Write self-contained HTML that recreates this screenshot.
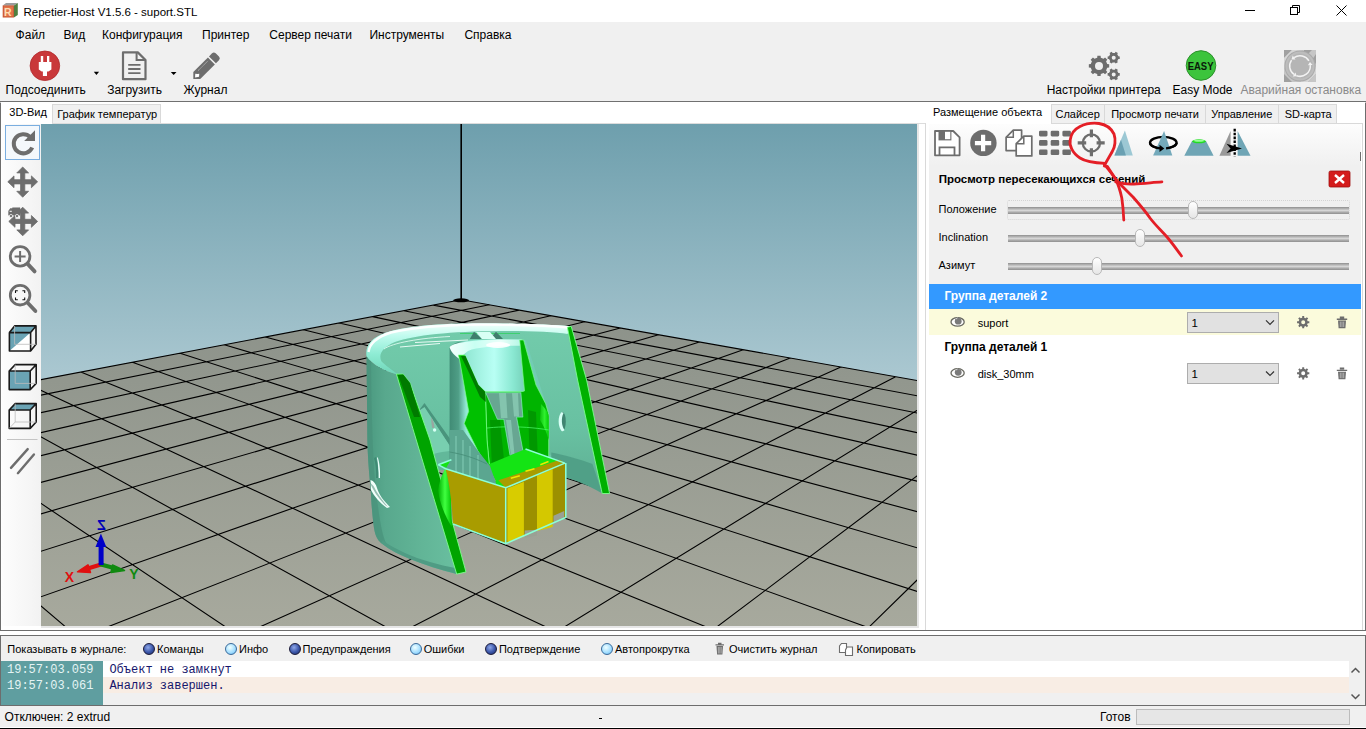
<!DOCTYPE html><html><head><meta charset="utf-8"><style>
*{margin:0;padding:0;box-sizing:border-box}
html,body{width:1366px;height:729px;overflow:hidden;background:#f0f0f0;font-family:"Liberation Sans",sans-serif;position:relative}
.t{position:absolute;white-space:nowrap}
.a{position:absolute}
svg{position:absolute;overflow:visible}
</style></head><body>
<div class="a" style="left:0px;top:0px;width:1366px;height:22px;background:#fff;"></div>
<div class="t" style="left:23.5px;top:6.6px;font-size:11.5px;line-height:11.5px;color:#000;font-weight:normal;font-family:'Liberation Sans', sans-serif;">Repetier-Host V1.5.6 - suport.STL</div>
<svg style="left:0;top:0" width="20" height="20" viewBox="0 0 20 20">
<path d="M2.7 5.4 L6 3 H17.8 L13.9 5.4Z" fill="#9c9c9c"/>
<path d="M13.9 5.4 L17.8 3 V15 L13.9 17.5Z" fill="#4f8040"/>
<rect x="2.7" y="5.4" width="11.2" height="12.1" fill="#c5502c"/>
<rect x="3.6" y="6.3" width="9.4" height="10.3" fill="#e2744a"/>
<text x="4" y="15.8" font-family="Liberation Sans" font-weight="bold" font-size="10.5" fill="#ffdcb0">R</text></svg><div class="a" style="left:1245px;top:10px;width:10px;height:1px;background:#000;"></div>
<svg style="left:1289px;top:4px" width="12" height="12" viewBox="0 0 12 12"><rect x="1.5" y="3.5" width="7" height="7" fill="none" stroke="#000"/><path d="M3.5 3.5V1.5H10.5V8.5H8.5" fill="none" stroke="#000"/></svg><svg style="left:1336px;top:5px" width="11" height="11" viewBox="0 0 11 11"><path d="M0.5 0.5L10.5 10.5M10.5 0.5L0.5 10.5" stroke="#000" stroke-width="1"/></svg><div class="t" style="left:15.6px;top:29.4px;font-size:12px;line-height:12px;color:#000;font-weight:normal;font-family:'Liberation Sans', sans-serif;">Файл</div>
<div class="t" style="left:63.5px;top:29.4px;font-size:12px;line-height:12px;color:#000;font-weight:normal;font-family:'Liberation Sans', sans-serif;">Вид</div>
<div class="t" style="left:102.0px;top:29.4px;font-size:12px;line-height:12px;color:#000;font-weight:normal;font-family:'Liberation Sans', sans-serif;">Конфигурация</div>
<div class="t" style="left:202.0px;top:29.4px;font-size:12px;line-height:12px;color:#000;font-weight:normal;font-family:'Liberation Sans', sans-serif;">Принтер</div>
<div class="t" style="left:269.3px;top:29.4px;font-size:12px;line-height:12px;color:#000;font-weight:normal;font-family:'Liberation Sans', sans-serif;">Сервер печати</div>
<div class="t" style="left:369.4px;top:29.4px;font-size:12px;line-height:12px;color:#000;font-weight:normal;font-family:'Liberation Sans', sans-serif;">Инструменты</div>
<div class="t" style="left:464.4px;top:29.4px;font-size:12px;line-height:12px;color:#000;font-weight:normal;font-family:'Liberation Sans', sans-serif;">Справка</div>
<div class="t" style="left:5.6px;top:83.8px;font-size:12px;line-height:12px;color:#000;font-weight:normal;font-family:'Liberation Sans', sans-serif;">Подсоединить</div>
<div class="t" style="left:107.2px;top:83.8px;font-size:12px;line-height:12px;color:#000;font-weight:normal;font-family:'Liberation Sans', sans-serif;">Загрузить</div>
<div class="t" style="left:183.6px;top:83.8px;font-size:12px;line-height:12px;color:#000;font-weight:normal;font-family:'Liberation Sans', sans-serif;">Журнал</div>
<div class="t" style="left:1046.7px;top:83.8px;font-size:12px;line-height:12px;color:#000;font-weight:normal;font-family:'Liberation Sans', sans-serif;">Настройки принтера</div>
<div class="t" style="left:1172.5px;top:83.8px;font-size:12px;line-height:12px;color:#000;font-weight:normal;font-family:'Liberation Sans', sans-serif;">Easy Mode</div>
<div class="t" style="left:1240.5px;top:83.8px;font-size:12px;line-height:12px;color:#8a8a8a;font-weight:normal;font-family:'Liberation Sans', sans-serif;">Аварийная остановка</div>
<svg style="left:0;top:0" width="1366" height="100" viewBox="0 0 1366 100">
<circle cx="44.9" cy="65.8" r="14.8" fill="#c9383a" stroke="#b02a2c" stroke-width="0.8"/>
<path d="M40.8 56h2.4v6.2h-2.4zM47 56h2.3v6.2H47z" fill="#fff"/>
<path d="M38.8 62.1h12.6v7.3l-3 2.2H47v4.3h-4.1v-4.3h-1.2l-2.9-2.2z" fill="#fff"/>
<path d="M93.8 71.8h5.3l-2.65 3.2z" fill="#000"/>
<path d="M170.8 71.9h5.7l-2.85 3.1z" fill="#000"/>
<path d="M123 52.4h14.8l7.7 7.6v19.2H123z" fill="none" stroke="#6d6d6d" stroke-width="2.2" stroke-linejoin="round"/>
<path d="M136.6 52.4v7.7h8.9" fill="none" stroke="#6d6d6d" stroke-width="2"/>
<path d="M128.2 64.9h12.3M128.2 69h12.3M128.2 73.2h12.3" stroke="#6d6d6d" stroke-width="1.8"/>
<g transform="translate(196.75 75.55) rotate(-45)">
<path d="M-4.9 0 L0 -4.9 H20.7 V4.9 H0 Z" fill="#6d6d6d"/>
<path d="M22.2 -4.9 H26.5 A2.6 2.6 0 0 1 29.1 -2.3 V2.3 A2.6 2.6 0 0 1 26.5 4.9 H22.2Z" fill="#6d6d6d"/>
<path d="M4.4 -2.5 H18.4" stroke="#d8d8d8" stroke-width="0.7" stroke-dasharray="1 0.6"/>
<path d="M-2.6 0.2 L0.2 -2.3 L1.6 -0.6 L3 0.6 L0.8 2.4Z" fill="#fff"/>
</g>
<path d="M1107.20 64.10 L1109.17 64.29 L1109.17 67.51 L1107.20 67.70 L1106.07 70.43 L1107.33 71.95 L1105.05 74.23 L1103.53 72.97 L1100.80 74.10 L1100.61 76.07 L1097.39 76.07 L1097.20 74.10 L1094.47 72.97 L1092.95 74.23 L1090.67 71.95 L1091.93 70.43 L1090.80 67.70 L1088.83 67.51 L1088.83 64.29 L1090.80 64.10 L1091.93 61.37 L1090.67 59.85 L1092.95 57.57 L1094.47 58.83 L1097.20 57.70 L1097.39 55.73 L1100.61 55.73 L1100.80 57.70 L1103.53 58.83 L1105.05 57.57 L1107.33 59.85 L1106.07 61.37Z M1103.00 65.90 A4.0 4.0 0 1 0 1095.00 65.90 A4.0 4.0 0 1 0 1103.00 65.90Z" fill="#6d6d6d" fill-rule="evenodd"/>
<path d="M1118.40 56.31 L1119.76 56.41 L1119.76 58.99 L1118.40 59.09 L1117.25 61.07 L1117.85 62.31 L1115.62 63.60 L1114.84 62.46 L1112.56 62.46 L1111.78 63.60 L1109.55 62.31 L1110.15 61.07 L1109.00 59.09 L1107.64 58.99 L1107.64 56.41 L1109.00 56.31 L1110.15 54.33 L1109.55 53.09 L1111.78 51.80 L1112.56 52.94 L1114.84 52.94 L1115.62 51.80 L1117.85 53.09 L1117.25 54.33Z M1115.70 57.70 A2.0 2.0 0 1 0 1111.70 57.70 A2.0 2.0 0 1 0 1115.70 57.70Z" fill="#6d6d6d" fill-rule="evenodd"/>
<path d="M1118.40 73.01 L1119.76 73.11 L1119.76 75.69 L1118.40 75.79 L1117.25 77.77 L1117.85 79.01 L1115.62 80.30 L1114.84 79.16 L1112.56 79.16 L1111.78 80.30 L1109.55 79.01 L1110.15 77.77 L1109.00 75.79 L1107.64 75.69 L1107.64 73.11 L1109.00 73.01 L1110.15 71.03 L1109.55 69.79 L1111.78 68.50 L1112.56 69.64 L1114.84 69.64 L1115.62 68.50 L1117.85 69.79 L1117.25 71.03Z M1115.70 74.40 A2.0 2.0 0 1 0 1111.70 74.40 A2.0 2.0 0 1 0 1115.70 74.40Z" fill="#6d6d6d" fill-rule="evenodd"/>
<circle cx="1201" cy="65.5" r="14.8" fill="#3cc43c" stroke="#2b8f2b" stroke-width="1"/>
<text x="1187.7" y="70" font-family="Liberation Sans" font-weight="bold" font-size="10" fill="#0a1a0a" textLength="25.8" lengthAdjust="spacingAndGlyphs">EASY</text>
<rect x="1284" y="50" width="32" height="32" fill="#c6c6c6"/>
<path d="M1284 50h8l-8 8zM1304 50h8l-8 8h0zM1316 54v10l-4-4zM1284 74v8h8zM1300 82h8l8-8v-6z" fill="#a0a0a0"/>
<path d="M1292 50h10l-18 18v-10zM1316 66v8l-8 8h-8z" fill="#d6d6d6"/>
<circle cx="1300" cy="66" r="15.6" fill="#a9a9a9"/>
<circle cx="1300" cy="66" r="14.6" fill="#bdbdbd"/>
<circle cx="1300" cy="66" r="12.6" fill="#b5b5b5"/>
<path d="M1294.09 57.56 A10.3 10.3 0 0 1 1308.92 60.85" fill="none" stroke="#f2f2f2" stroke-width="1.5"/><path d="M1310.26 65.10 A10.3 10.3 0 0 1 1296.48 75.68" fill="none" stroke="#f2f2f2" stroke-width="1.5"/><path d="M1294.09 74.44 A10.3 10.3 0 0 1 1291.56 60.09" fill="none" stroke="#f2f2f2" stroke-width="1.5"/><path d="M1291.47 59.40 L1292.72 55.60 L1295.47 59.53Z" fill="#f2f2f2"/><path d="M1309.98 61.91 L1312.65 64.89 L1307.87 65.31Z" fill="#f2f2f2"/><path d="M1296.71 76.27 L1292.72 76.40 L1295.47 72.47Z" fill="#f2f2f2"/>
</svg><div class="a" style="left:0px;top:101px;width:1366px;height:1px;background:#707070;"></div>
<div class="a" style="left:0px;top:102px;width:1366px;height:1px;background:#c8c8c8;"></div>
<div class="a" style="left:0px;top:103px;width:1px;height:527px;background:#6d6d6d;"></div>
<div class="a" style="left:1365px;top:103px;width:1px;height:527px;background:#6d6d6d;"></div>
<div class="a" style="left:0px;top:630px;width:1366px;height:1px;background:#6d6d6d;"></div>
<div class="a" style="left:0px;top:631px;width:1366px;height:4px;background:#fff;"></div>
<div class="a" style="left:1px;top:102px;width:924px;height:528px;background:#fff;"></div>
<div class="a" style="left:52px;top:123px;width:873px;height:1px;background:#dcdcdc;"></div>
<div class="a" style="left:1px;top:102px;width:51px;height:22px;background:#fff;"></div>
<div class="a" style="left:52px;top:104px;width:109px;height:19px;background:#f0f0f0;border:1px solid #d9d9d9;border-bottom:none"></div>
<div class="t" style="left:9.3px;top:106.7px;font-size:11px;line-height:11px;color:#000;font-weight:normal;font-family:'Liberation Sans', sans-serif;">3D-Вид</div>
<div class="t" style="left:57.2px;top:108.6px;font-size:11px;line-height:11px;color:#000;font-weight:normal;font-family:'Liberation Sans', sans-serif;">График температур</div>
<div class="a" style="left:2px;top:124px;width:39px;height:502px;background:linear-gradient(to right,#fdfdfd,#f2f2f2);"></div>
<div class="a" style="left:5px;top:125px;width:35px;height:35px;background:#f4f8fc;border:1px solid #7aaee0"></div>
<svg style="left:0;top:0" width="45" height="480" viewBox="0 0 45 480">
<path d="M30.2 137 A9.6 9.6 0 1 0 32.2 147.5" fill="none" stroke="#6d6d6d" stroke-width="4"/>
<path d="M35 130.2 V141 H24.2 Z" fill="#6d6d6d"/>
<g fill="#6d6d6d" stroke="#6d6d6d" stroke-width="0.8" stroke-linejoin="round">
<path d="M20.6 172 h4.2 v19.6 h-4.2z M13.5 179.7 h18.4 v4.2 h-18.4z"/>
<path d="M22.7 167 l-5.9 5.9 h11.8z M22.7 197.2 l-5.9 -5.9 h11.8z M7.8 181.8 l6.2 -5.9 v11.8z M37.6 181.8 l-6.2 -5.9 v11.8z"/>
<path d="M20.6 212 h4.2 v19 h-4.2z M13.5 219.3 h18.4 v4.2 h-18.4z"/>
<path d="M22.7 207.2 l-5.9 5.9 h11.8z M22.7 235.8 l-5.9 -5.9 h11.8z M8.8 221.4 l6.2 -5.9 v11.8z M37.6 221.4 l-6.2 -5.9 v11.8z"/>
<path d="M12.5 207.8 h7.5 v7.4 h-7.5z M8.6 211 l1.6 -2.4 h2.6 v6.6 h-4.2z" stroke-width="0.5"/>
</g>
<circle cx="11" cy="216" r="1.6" fill="#6d6d6d" stroke="#fff" stroke-width="0.7"/><circle cx="17" cy="216" r="1.6" fill="#6d6d6d" stroke="#fff" stroke-width="0.7"/><path d="M9.6 211.3h2.2" stroke="#fff" stroke-width="1"/>
<circle cx="20.1" cy="256.4" r="9.8" fill="none" stroke="#6d6d6d" stroke-width="2.8"/>
<path d="M27.6 263.9 L34.6 271.4" stroke="#6d6d6d" stroke-width="3.8" stroke-linecap="round"/>
<path d="M14.6 256.4h11M20.1 250.9v11" stroke="#6d6d6d" stroke-width="2"/>
<circle cx="20.1" cy="295.2" r="9.8" fill="none" stroke="#6d6d6d" stroke-width="2.8"/>
<path d="M27.6 302.7 L35.4 311" stroke="#6d6d6d" stroke-width="3.8" stroke-linecap="round"/>
<path d="M15.5 293v-2.3h2.3M24.7 293v-2.3h-2.3M15.5 297.4v2.3h2.3M24.7 297.4v2.3h-2.3" fill="none" stroke="#111" stroke-width="1.1"/>
<g stroke="#1a1a1a" stroke-width="1.6" fill="none" stroke-linejoin="round">
<path d="M9.4 332.6 L31 351" fill="none"/>
</g>
<path d="M9.4 332.6 H30.6 V351 H9.4Z" fill="#fff"/>
<path d="M9.4 332.6 L14.6 325.9 H36 L30.6 332.6Z M9.4 332.6 H30.6 L9.4 351Z" fill="#6aa3b4"/>
<g stroke="#1a1a1a" stroke-width="1.6" fill="none" stroke-linejoin="round">
<path d="M9.4 332.6 H30.6 V351 H9.4Z M9.4 332.6 L14.6 325.9 H36 V344.3 L30.6 351 M30.6 332.6 L36 325.9"/>
</g>
<path d="M14.6 326 V344.3 H36" stroke="#bbb" stroke-width="0.8" fill="none"/>
<path d="M9.2 371 H30.2 V389.6 H9.2Z" fill="#6aa3b4"/>
<g stroke="#1a1a1a" stroke-width="1.6" fill="none" stroke-linejoin="round">
<path d="M9.2 371 H30.2 V389.6 H9.2Z M9.2 371 L15.2 364.6 H36.2 V383.4 L30.2 389.6 M30.2 371 L36.2 364.6"/>
</g>
<path d="M15.2 364.6 V383.4 H36.2" stroke="#bbb" stroke-width="0.8" fill="none"/>
<path d="M9.2 410 L15.2 403.6 H36.2 L30.2 410Z" fill="#6aa3b4"/>
<g stroke="#1a1a1a" stroke-width="1.6" fill="none" stroke-linejoin="round">
<path d="M9.2 410 H30.2 V428.4 H9.2Z M9.2 410 L15.2 403.6 H36.2 V422 L30.2 428.4 M30.2 410 L36.2 403.6"/>
</g>
<path d="M15.2 403.6 V422 H36.2 M15.2 422 L9.2 428.4" stroke="#bbb" stroke-width="0.8" fill="none"/>
<path d="M7 439.5 H37.5" stroke="#c4c4c4" stroke-width="1"/>
<path d="M11 467.9 L27.7 449.1 M17.9 473.2 L33.9 454.5" stroke="#6d6d6d" stroke-width="2.4" stroke-linecap="round"/>
</svg><div class="a" style="left:925px;top:102px;width:440px;height:528px;background:#fff;"></div>
<div class="a" style="left:925px;top:123px;width:438px;height:507px;background:#fff;border:1px solid #d9d9d9;border-bottom:none"></div>
<div class="a" style="left:926px;top:102px;width:125px;height:23px;background:#fff;"></div>
<div class="a" style="left:1051px;top:104px;width:54px;height:19px;background:#f0f0f0;border:1px solid #d9d9d9;border-bottom:none"></div>
<div class="a" style="left:1104px;top:104px;width:102px;height:19px;background:#f0f0f0;border:1px solid #d9d9d9;border-bottom:none"></div>
<div class="a" style="left:1205px;top:104px;width:74px;height:19px;background:#f0f0f0;border:1px solid #d9d9d9;border-bottom:none"></div>
<div class="a" style="left:1278px;top:104px;width:59px;height:19px;background:#f0f0f0;border:1px solid #d9d9d9;border-bottom:none"></div>
<div class="t" style="left:933.0px;top:106.7px;font-size:11px;line-height:11px;color:#000;font-weight:normal;font-family:'Liberation Sans', sans-serif;">Размещение объекта</div>
<div class="t" style="left:1055.5px;top:108.5px;font-size:11px;line-height:11px;color:#000;font-weight:normal;font-family:'Liberation Sans', sans-serif;">Слайсер</div>
<div class="t" style="left:1111.2px;top:108.5px;font-size:11px;line-height:11px;color:#000;font-weight:normal;font-family:'Liberation Sans', sans-serif;">Просмотр печати</div>
<div class="t" style="left:1211.2px;top:108.5px;font-size:11px;line-height:11px;color:#000;font-weight:normal;font-family:'Liberation Sans', sans-serif;">Управление</div>
<div class="t" style="left:1284.7px;top:108.5px;font-size:11px;line-height:11px;color:#000;font-weight:normal;font-family:'Liberation Sans', sans-serif;">SD-карта</div>
<div class="a" style="left:929px;top:124px;width:432px;height:42px;background:linear-gradient(to bottom,#fdfdfd,#f0f0f0);"></div>
<div class="a" style="left:929px;top:166px;width:432px;height:118px;background:#f0f0f0;"></div>
<div class="a" style="left:1360px;top:152px;width:1px;height:9px;background:#6d6d6d;"></div>
<div class="t" style="left:938.7px;top:174.0px;font-size:11.5px;line-height:11.5px;color:#000;font-weight:bold;font-family:'Liberation Sans', sans-serif;">Просмотр пересекающихся сечений</div>
<div class="t" style="left:938.5px;top:203.7px;font-size:11px;line-height:11px;color:#000;font-weight:normal;font-family:'Liberation Sans', sans-serif;">Положение</div>
<div class="t" style="left:938.5px;top:231.9px;font-size:11px;line-height:11px;color:#000;font-weight:normal;font-family:'Liberation Sans', sans-serif;">Inclination</div>
<div class="t" style="left:938.5px;top:259.7px;font-size:11px;line-height:11px;color:#000;font-weight:normal;font-family:'Liberation Sans', sans-serif;">Азимут</div>
<div class="a" style="left:1008px;top:207px;width:341px;height:7px;background:linear-gradient(to bottom,#8e8e8e 0%,#b4b4b4 25%,#d6d6d6 50%,#a8a8a8 78%,#8f8f8f 100%);"></div>
<div class="a" style="left:1188px;top:201px;width:10px;height:18px;background:linear-gradient(to bottom,#ffffff,#e6e6e6);border:1px solid #b8b8b8;border-radius:5px"></div>
<div class="a" style="left:1008px;top:235px;width:341px;height:7px;background:linear-gradient(to bottom,#8e8e8e 0%,#b4b4b4 25%,#d6d6d6 50%,#a8a8a8 78%,#8f8f8f 100%);"></div>
<div class="a" style="left:1135px;top:229px;width:10px;height:18px;background:linear-gradient(to bottom,#ffffff,#e6e6e6);border:1px solid #b8b8b8;border-radius:5px"></div>
<div class="a" style="left:1008px;top:263px;width:341px;height:7px;background:linear-gradient(to bottom,#8e8e8e 0%,#b4b4b4 25%,#d6d6d6 50%,#a8a8a8 78%,#8f8f8f 100%);"></div>
<div class="a" style="left:1092px;top:257px;width:10px;height:18px;background:linear-gradient(to bottom,#ffffff,#e6e6e6);border:1px solid #b8b8b8;border-radius:5px"></div>
<div class="a" style="left:1007px;top:200px;width:343px;height:20px;background:transparent;border:1px dotted #d4d4d4;border-radius:2px"></div>
<div class="a" style="left:929px;top:284px;width:432px;height:25px;background:#3399ff;"></div>
<div class="t" style="left:944.4px;top:289.8px;font-size:12px;line-height:12px;color:#fff;font-weight:bold;font-family:'Liberation Sans', sans-serif;">Группа деталей 2</div>
<div class="a" style="left:929px;top:309px;width:432px;height:26px;background:#fbfbdc;"></div>
<div class="t" style="left:977.7px;top:317.7px;font-size:11px;line-height:11px;color:#000;font-weight:normal;font-family:'Liberation Sans', sans-serif;">suport</div>
<div class="t" style="left:944.4px;top:340.6px;font-size:12px;line-height:12px;color:#000;font-weight:bold;font-family:'Liberation Sans', sans-serif;">Группа деталей 1</div>
<div class="t" style="left:977.7px;top:368.7px;font-size:11px;line-height:11px;color:#000;font-weight:normal;font-family:'Liberation Sans', sans-serif;">disk_30mm</div>
<div class="a" style="left:1187px;top:312px;width:92px;height:21px;background:#e1e1e1;border:1px solid #adadad"></div>
<div class="t" style="left:1191.6px;top:317.5px;font-size:11.5px;line-height:11.5px;color:#000;font-weight:normal;font-family:'Liberation Sans', sans-serif;">1</div>
<div class="a" style="left:1187px;top:363px;width:92px;height:21px;background:#e1e1e1;border:1px solid #adadad"></div>
<div class="t" style="left:1191.6px;top:368.6px;font-size:11.5px;line-height:11.5px;color:#000;font-weight:normal;font-family:'Liberation Sans', sans-serif;">1</div>
<svg style="left:0;top:0" width="1366" height="400" viewBox="0 0 1366 400"><path d="M1266 320.4l4 4 4-4" fill="none" stroke="#333" stroke-width="1.2"/><ellipse cx="957.6" cy="321.9" rx="6.6" ry="4.3" fill="#fff" stroke="#6a6a62" stroke-width="1.3"/><circle cx="958.2" cy="321.2" r="3.4" fill="#7a7a7a"/><path d="M956 319.0 l1.6 -1.2" stroke="#ddd" stroke-width="0.9"/><path d="M1307.69 321.21 L1309.32 321.23 L1309.32 323.17 L1307.69 323.19 L1307.07 324.68 L1308.22 325.84 L1306.84 327.22 L1305.68 326.07 L1304.19 326.69 L1304.17 328.32 L1302.23 328.32 L1302.21 326.69 L1300.72 326.07 L1299.56 327.22 L1298.18 325.84 L1299.33 324.68 L1298.71 323.19 L1297.08 323.17 L1297.08 321.23 L1298.71 321.21 L1299.33 319.72 L1298.18 318.56 L1299.56 317.18 L1300.72 318.33 L1302.21 317.71 L1302.23 316.08 L1304.17 316.08 L1304.19 317.71 L1305.68 318.33 L1306.84 317.18 L1308.22 318.56 L1307.07 319.72Z M1305.20 322.20 A2.0 2.0 0 1 0 1301.20 322.20 A2.0 2.0 0 1 0 1305.20 322.20Z" fill="#6d6d6d" fill-rule="evenodd"/><path d="M1336.8 318.59999999999997h10.4v1.3h-10.4z M1339.8 316.4h4.4v2h-4.4z" fill="#6d6d6d"/><path d="M1338 320.59999999999997h8l-0.6 7.6h-6.8z" fill="#6d6d6d"/><path d="M1340.3 321.59999999999997v5.4M1342 321.59999999999997v5.4M1343.7 321.59999999999997v5.4" stroke="#ddd" stroke-width="0.6"/><path d="M1266 371.5l4 4 4-4" fill="none" stroke="#333" stroke-width="1.2"/><ellipse cx="957.6" cy="373.0" rx="6.6" ry="4.3" fill="#fff" stroke="#6a6a62" stroke-width="1.3"/><circle cx="958.2" cy="372.3" r="3.4" fill="#7a7a7a"/><path d="M956 370.1 l1.6 -1.2" stroke="#ddd" stroke-width="0.9"/><path d="M1307.69 372.31 L1309.32 372.33 L1309.32 374.27 L1307.69 374.29 L1307.07 375.78 L1308.22 376.94 L1306.84 378.32 L1305.68 377.17 L1304.19 377.79 L1304.17 379.42 L1302.23 379.42 L1302.21 377.79 L1300.72 377.17 L1299.56 378.32 L1298.18 376.94 L1299.33 375.78 L1298.71 374.29 L1297.08 374.27 L1297.08 372.33 L1298.71 372.31 L1299.33 370.82 L1298.18 369.66 L1299.56 368.28 L1300.72 369.43 L1302.21 368.81 L1302.23 367.18 L1304.17 367.18 L1304.19 368.81 L1305.68 369.43 L1306.84 368.28 L1308.22 369.66 L1307.07 370.82Z M1305.20 373.30 A2.0 2.0 0 1 0 1301.20 373.30 A2.0 2.0 0 1 0 1305.20 373.30Z" fill="#6d6d6d" fill-rule="evenodd"/><path d="M1336.8 369.7h10.4v1.3h-10.4z M1339.8 367.5h4.4v2h-4.4z" fill="#6d6d6d"/><path d="M1338 371.7h8l-0.6 7.6h-6.8z" fill="#6d6d6d"/><path d="M1340.3 372.7v5.4M1342 372.7v5.4M1343.7 372.7v5.4" stroke="#ddd" stroke-width="0.6"/><path d="M935 131h18.2l6.4 6.4V155.3H935z" fill="#fff" stroke="#6d6d6d" stroke-width="1.8" stroke-linejoin="round"/>
<path d="M938.5 131h12.9v9.4h-12.9z" fill="#6d6d6d"/><path d="M945 131.8h5.3v7.4H945z" fill="#fff"/>
<path d="M939.5 155.3V147.3h15v8" fill="none" stroke="#6d6d6d" stroke-width="1.8"/>
<circle cx="983.4" cy="142.9" r="13.2" fill="#6d6d6d"/>
<path d="M981 134.8h4.2v16.4H981z M974.9 141h16.3v4.3H974.9z" fill="#fff"/>
<path d="M1013.3 130.1h8.3v20.5h-15.5V137.3z" fill="#fff" stroke="#6d6d6d" stroke-width="1.7" stroke-linejoin="round"/>
<path d="M1006 137.3h7.3v-7.2" fill="none" stroke="#6d6d6d" stroke-width="1.5"/>
<path d="M1023.8 136.1h8v19.8h-15.6V143.7z" fill="#fff" stroke="#6d6d6d" stroke-width="1.7" stroke-linejoin="round"/>
<path d="M1016.2 143.7h7.6v-7.6" fill="none" stroke="#6d6d6d" stroke-width="1.5"/>
<rect x="1039" y="130.8" width="8.5" height="5.6" rx="1.3" fill="#6d6d6d"/><rect x="1039" y="140.1" width="8.5" height="5.6" rx="1.3" fill="#6d6d6d"/><rect x="1039" y="149.4" width="8.5" height="5.6" rx="1.3" fill="#6d6d6d"/><rect x="1050.7" y="130.8" width="8.5" height="5.6" rx="1.3" fill="#6d6d6d"/><rect x="1050.7" y="140.1" width="8.5" height="5.6" rx="1.3" fill="#6d6d6d"/><rect x="1050.7" y="149.4" width="8.5" height="5.6" rx="1.3" fill="#6d6d6d"/><rect x="1062.4" y="130.8" width="8.5" height="5.6" rx="1.3" fill="#6d6d6d"/><rect x="1062.4" y="140.1" width="8.5" height="5.6" rx="1.3" fill="#6d6d6d"/><rect x="1062.4" y="149.4" width="8.5" height="5.6" rx="1.3" fill="#6d6d6d"/><circle cx="1091.4" cy="142.9" r="8.6" fill="none" stroke="#6d6d6d" stroke-width="2.3"/>
<path d="M1091.4 129.6v7.7M1091.4 148.2v8M1077.7 142.9h8.5M1096.6 142.9h8.1" stroke="#6d6d6d" stroke-width="3.2"/>
<path d="M1114.4 155.5L1124.9 130.6L1132.8 155.5z" fill="#9cc8d4"/><path d="M1114.4 155.5L1121 139.8L1125.9 155.5z" fill="#6aa0b2"/>
<ellipse cx="1163.3" cy="142.7" rx="13.3" ry="5.8" fill="none" stroke="#000" stroke-width="2.3"/>
<path d="M1153.1 155.5L1164.1 130.9L1172.3 155.5z" fill="#74aabb"/>
<path d="M1150.00 142.70 A13.3 5.8 0 0 0 1160.99 148.41" fill="none" stroke="#000" stroke-width="2.3"/>
<path d="M1159.5 144.8 L1164.3 148.4 L1159.5 152z" fill="#000"/>
<path d="M1166.07 148.37 A13.3 5.8 0 0 0 1176.60 142.70" fill="none" stroke="#000" stroke-width="2.3"/>
<path d="M1184.3 155.7L1192 141h14l7.6 14.7z" fill="#6fa5b5"/>
<ellipse cx="1199" cy="141.3" rx="7" ry="2" fill="#22dd22"/><ellipse cx="1199" cy="140.8" rx="5" ry="1" fill="#99ff99"/>
<path d="M1219.4 155.7L1230.6 131.1V155.7z" fill="#9a9a9a"/>
<path d="M1237.6 131.1L1250.5 155.7H1237.6z" fill="#6fa5b5"/>
<path d="M1234.7 128.8V156.3" stroke="#000" stroke-width="2.3" stroke-dasharray="2.6 1.3"/>
<path d="M1226.5 143.8 L1242 148.5 L1226.5 153 L1230.5 148.5z" fill="#000"/>
<rect x="1329" y="171" width="21" height="16" rx="1.5" fill="#d41c1c" stroke="#a01010" stroke-width="0.8"/>
<path d="M1335 175 L1344 183 M1344 175 L1335 183" stroke="#fff" stroke-width="2.4"/>
<g fill="none" stroke="#e41e26" stroke-width="2.8" stroke-linecap="round" stroke-linejoin="round">
<path d="M1105.3 163.4 C1095 163 1086 162 1080 158 C1072 153 1069 145 1070.3 139.7 C1071 133 1075 129 1080 126.5 C1086 123.5 1093 122.8 1099 123.5 C1106 124.5 1111 128 1114 134 C1116 140 1115 147 1112.5 151 C1110 156 1107 160 1104.3 166"/>
<path d="M1104.3 164.4 C1109 170 1113 175 1116 180 C1119 186 1120.5 192 1121.8 198 C1123 206 1123.5 213 1123.8 220"/>
<path d="M1107.4 166.5 C1111 172 1114 177 1118 182 C1124 188 1128 192 1133 197 C1140 205 1146 212 1150 218 C1156 226 1162 231 1167 237 C1173 244 1177 250 1181.5 256"/>
<path d="M1115.6 181.9 C1122 183.5 1128 184.5 1134 184 C1143 183.5 1152 182.6 1161.9 181.9"/>
</g></svg><div class="a" style="left:0px;top:635px;width:1366px;height:1px;background:#6d6d6d;"></div>
<div class="a" style="left:0px;top:636px;width:1px;height:70px;background:#6d6d6d;"></div>
<div class="a" style="left:1365px;top:636px;width:1px;height:70px;background:#6d6d6d;"></div>
<div class="a" style="left:0px;top:705px;width:1366px;height:1px;background:#6d6d6d;"></div>
<div class="a" style="left:1px;top:661px;width:1348px;height:16px;background:#fff;"></div>
<div class="a" style="left:1px;top:677px;width:1348px;height:16px;background:#f8ede4;"></div>
<div class="a" style="left:1px;top:661px;width:102px;height:44px;background:#5f9ea0;"></div>
<div class="t" style="left:7.3px;top:643.9px;font-size:11px;line-height:11px;color:#000;font-weight:normal;font-family:'Liberation Sans', sans-serif;">Показывать в журнале:</div>
<div class="a" style="left:143px;top:643px;width:12px;height:12px;background:radial-gradient(circle at 40% 35%,#8fa8e8,#3a55a8 55%,#1a2a60);border-radius:50%;border:1px solid #1a1a3a"></div>
<div class="t" style="left:157.0px;top:643.9px;font-size:11px;line-height:11px;color:#000;font-weight:normal;font-family:'Liberation Sans', sans-serif;">Команды</div>
<div class="a" style="left:225px;top:643px;width:12px;height:12px;background:radial-gradient(circle at 40% 35%,#f0ffff,#9fdcff 60%,#58a8e0);border-radius:50%;border:1px solid #3a6a9a"></div>
<div class="t" style="left:239.0px;top:643.9px;font-size:11px;line-height:11px;color:#000;font-weight:normal;font-family:'Liberation Sans', sans-serif;">Инфо</div>
<div class="a" style="left:289px;top:643px;width:12px;height:12px;background:radial-gradient(circle at 40% 35%,#8fa8e8,#3a55a8 55%,#1a2a60);border-radius:50%;border:1px solid #1a1a3a"></div>
<div class="t" style="left:302.6px;top:643.9px;font-size:11px;line-height:11px;color:#000;font-weight:normal;font-family:'Liberation Sans', sans-serif;">Предупраждения</div>
<div class="a" style="left:410px;top:643px;width:12px;height:12px;background:radial-gradient(circle at 40% 35%,#f0ffff,#9fdcff 60%,#58a8e0);border-radius:50%;border:1px solid #3a6a9a"></div>
<div class="t" style="left:423.7px;top:643.9px;font-size:11px;line-height:11px;color:#000;font-weight:normal;font-family:'Liberation Sans', sans-serif;">Ошибки</div>
<div class="a" style="left:485px;top:643px;width:12px;height:12px;background:radial-gradient(circle at 40% 35%,#8fa8e8,#3a55a8 55%,#1a2a60);border-radius:50%;border:1px solid #1a1a3a"></div>
<div class="t" style="left:498.9px;top:643.9px;font-size:11px;line-height:11px;color:#000;font-weight:normal;font-family:'Liberation Sans', sans-serif;">Подтверждение</div>
<div class="a" style="left:601px;top:643px;width:12px;height:12px;background:radial-gradient(circle at 40% 35%,#f0ffff,#9fdcff 60%,#58a8e0);border-radius:50%;border:1px solid #3a6a9a"></div>
<div class="t" style="left:615.0px;top:643.9px;font-size:11px;line-height:11px;color:#000;font-weight:normal;font-family:'Liberation Sans', sans-serif;">Автопрокрутка</div>
<div class="t" style="left:729.0px;top:643.9px;font-size:11px;line-height:11px;color:#000;font-weight:normal;font-family:'Liberation Sans', sans-serif;">Очистить журнал</div>
<div class="t" style="left:856.5px;top:643.9px;font-size:11px;line-height:11px;color:#000;font-weight:normal;font-family:'Liberation Sans', sans-serif;">Копировать</div>
<svg style="left:0;top:0" width="1366" height="729" viewBox="0 0 1366 729">
<path d="M715.5 644.2h8.5v1.2h-8.5z M718 642.8h3.5v1.4H718z" fill="#6d6d6d"/><path d="M716.5 646h6.5l-0.6 8.5h-5.3z" fill="#6d6d6d"/>
<path d="M718.4 647v6.5M719.8 647v6.5M721.2 647v6.5" stroke="#e8e8e8" stroke-width="0.5"/>
<path d="M841.5 643.5h5v9h-7v-6.5z" fill="#fff" stroke="#6d6d6d" stroke-width="1.1"/>
<path d="M847 647h5.5v8.5h-7V650z" fill="#fff" stroke="#6d6d6d" stroke-width="1.1"/>
<path d="M1351.5 672.5l4-4 4 4M1351.5 694.5l4 4 4-4" fill="none" stroke="#555" stroke-width="1.5"/>
</svg><div class="t" style="left:7.0px;top:663.8px;font-size:12px;line-height:12px;color:#e4f4f4;font-weight:normal;font-family:'Liberation Mono', monospace;">19:57:03.059</div>
<div class="t" style="left:7.0px;top:680.0px;font-size:12px;line-height:12px;color:#e4f4f4;font-weight:normal;font-family:'Liberation Mono', monospace;">19:57:03.061</div>
<div class="t" style="left:109.4px;top:663.8px;font-size:12px;line-height:12px;color:#16166c;font-weight:normal;font-family:'Liberation Mono', monospace;">Объект не замкнут</div>
<div class="t" style="left:109.4px;top:680.0px;font-size:12px;line-height:12px;color:#16166c;font-weight:normal;font-family:'Liberation Mono', monospace;">Анализ завершен.</div>
<div class="t" style="left:4.6px;top:711.4px;font-size:12px;line-height:12px;color:#000;font-weight:normal;font-family:'Liberation Sans', sans-serif;">Отключен: 2 extrud</div>
<div class="a" style="left:599px;top:718px;width:3px;height:1px;background:#000;"></div>
<div class="t" style="left:1100.0px;top:711.0px;font-size:12px;line-height:12px;color:#000;font-weight:normal;font-family:'Liberation Sans', sans-serif;">Готов</div>
<div class="a" style="left:1136px;top:709px;width:214px;height:16px;background:#e6e6e6;border:1px solid #bcbcbc"></div>
<div class="a" style="left:0px;top:727px;width:1366px;height:1px;background:#fff;"></div>
<div class="a" style="left:0px;top:728px;width:1366px;height:1px;background:#000;"></div>
<div class="a" style="left:917px;top:124px;width:2px;height:504px;background:#e6e6e6;"></div>
<div class="a" style="left:41px;top:626px;width:878px;height:2px;background:#e6e6e6;"></div>
<svg style="left:41px;top:124px;overflow:hidden" width="876" height="502" viewBox="41 124 876 502"><defs><linearGradient id="sky" x1="0" y1="124" x2="0" y2="626" gradientUnits="userSpaceOnUse">
<stop offset="0" stop-color="#6e9fad"/><stop offset="0.51" stop-color="#abc8d1"/><stop offset="1" stop-color="#e6f0f3"/></linearGradient>
<linearGradient id="floor" x1="0" y1="299" x2="0" y2="626" gradientUnits="userSpaceOnUse">
<stop offset="0" stop-color="#8b9189"/><stop offset="1" stop-color="#a7a99d"/></linearGradient>
<clipPath id="vc"><rect x="41" y="124" width="876" height="502"/></clipPath></defs><rect x="41" y="124" width="876" height="502" fill="url(#sky)"/><path d="M461.1 299.8 L-448.3 472.5 L740.9 5929.4 L1345.4 456.3Z" fill="url(#floor)"/><path d="M461.1 299.8L1345.4 456.3M461.1 299.8L-448.3 472.5M433.4 305.1L1343.2 475.7M489.3 304.8L-443.8 492.8M403.9 310.7L1340.8 497.6M519.2 310.1L-438.9 515.6M372.6 316.6L1338.1 522.4M550.8 315.7L-433.2 541.5M339.2 323.0L1335.0 550.7M584.5 321.7L-426.8 571.0M303.5 329.8L1331.3 583.4M620.3 328.0L-419.4 605.1M265.3 337.0L1327.1 621.5M658.5 334.8L-410.7 644.8M224.3 344.8L1322.2 666.5M699.4 342.0L-400.5 691.6M180.1 353.2L1316.2 720.5M743.2 349.7L-388.3 747.8M132.4 362.2L1308.9 786.5M790.2 358.1L-373.3 816.3M80.8 372.0L1299.8 868.9M840.9 367.0L-354.7 901.8M24.8 382.7L1288.1 974.7M895.6 376.7L-330.8 1011.4M-36.3 394.3L1272.6 1115.6M954.9 387.2L-299.1 1157.1M-103.2 407.0L1250.8 1312.6M1019.4 398.6L-254.8 1360.1M-176.6 420.9L1218.3 1607.4M1089.7 411.1L-188.9 1662.6M-257.8 436.3L1164.2 2096.8M1166.8 424.7L-80.2 2161.5M-347.8 453.4L1056.9 3068.6M1251.6 439.7L133.1 3140.0M-448.3 472.5L740.9 5929.4M1345.4 456.3L740.9 5929.4" stroke="#000" stroke-width="1.1" fill="none"/><path d="M461.2 124 V299.8" stroke="#000" stroke-width="1.6"/><ellipse cx="461.1" cy="300.3" rx="8" ry="2" fill="#000"/><path d="M101 564.5 L86 569" stroke="#e01010" stroke-width="4" stroke-linecap="round"/>
<path d="M77.5 571.8 L88 564.8 L90.5 572.5Z" fill="#e01010" stroke="#e01010" stroke-width="1.5" stroke-linejoin="round"/>
<path d="M101 564.5 L114 568" stroke="#108a10" stroke-width="4" stroke-linecap="round"/>
<path d="M124.5 570.5 L112.5 565 L111 572.5Z" fill="#108a10" stroke="#108a10" stroke-width="1.5" stroke-linejoin="round"/>
<path d="M98.6 546 h5 v19 h-5z" fill="#0000c8"/><path d="M95.5 547 L100.9 533.4 L106.3 547z" fill="#0000c8"/>
<text x="101.5" y="529.5" text-anchor="middle" font-family="Liberation Sans" font-weight="bold" font-size="14" fill="#0000b8" transform="translate(203 0) scale(-1 1)">Z</text>
<text x="69.5" y="582" text-anchor="middle" font-family="Liberation Sans" font-weight="bold" font-size="14" fill="#e01010">X</text>
<text x="134" y="579" text-anchor="middle" font-family="Liberation Sans" font-weight="bold" font-size="14" fill="#108a10">Y</text><defs>
<linearGradient id="cylL" x1="366" y1="0" x2="460" y2="0" gradientUnits="userSpaceOnUse">
<stop offset="0" stop-color="#4a987f"/><stop offset="0.2" stop-color="#58a88d"/><stop offset="0.6" stop-color="#62b597"/><stop offset="1" stop-color="#6ac0a1"/></linearGradient>
<linearGradient id="rim" x1="0" y1="323" x2="0" y2="375" gradientUnits="userSpaceOnUse">
<stop offset="0" stop-color="#f4fffc"/><stop offset="0.25" stop-color="#c0fbee"/><stop offset="0.6" stop-color="#8eecd4"/><stop offset="1" stop-color="#6ed4b6"/></linearGradient>
<linearGradient id="tower" x1="449" y1="0" x2="527" y2="0" gradientUnits="userSpaceOnUse">
<stop offset="0" stop-color="#3f8a74"/><stop offset="0.12" stop-color="#4f9e86"/><stop offset="0.22" stop-color="#92e8d4"/><stop offset="0.58" stop-color="#b8fff4"/><stop offset="0.82" stop-color="#8ae8d2"/><stop offset="1" stop-color="#72ccb4"/></linearGradient>
<linearGradient id="inner" x1="0" y1="330" x2="0" y2="500" gradientUnits="userSpaceOnUse">
<stop offset="0" stop-color="#72cbab"/><stop offset="0.6" stop-color="#68c0a1"/><stop offset="1" stop-color="#5cab90"/></linearGradient>
<linearGradient id="gface" x1="438" y1="0" x2="452" y2="0" gradientUnits="userSpaceOnUse">
<stop offset="0" stop-color="#00b000"/><stop offset="0.5" stop-color="#40ff40"/><stop offset="1" stop-color="#00c000"/></linearGradient>
<linearGradient id="gbulge" x1="538" y1="0" x2="549" y2="0" gradientUnits="userSpaceOnUse">
<stop offset="0" stop-color="#00b000"/><stop offset="0.6" stop-color="#30f030"/><stop offset="1" stop-color="#00c800"/></linearGradient>
<linearGradient id="ttop" x1="449" y1="0" x2="523" y2="0" gradientUnits="userSpaceOnUse">
<stop offset="0" stop-color="#f6fffd"/><stop offset="0.35" stop-color="#c8fff2"/><stop offset="0.7" stop-color="#eafffa"/><stop offset="1" stop-color="#b0f6e4"/></linearGradient>
</defs><path d="M366.6 356.2 C365 345 372 338 385 333 C405 326 440 323.5 480 323.3 C520 323.3 550 324.5 571.2 326.3 L586.6 380 L602 460 L565 463 L446 469 L434.8 470 L396.4 374.2 C388 372 374 364 366.6 356.2Z" fill="#6cc4a6"/><path d="M381.4 361.2 C378 354 383 347 395 342 C415 335 450 331.5 500 331 C530 331 555 332 567.5 334 L577.6 380 L602.2 493.5 C597 480 592 466 580 460 C565 455 555 454 548 455 L520 470 L446 470 L410 383 L403.2 374.1 C395 371 386 366 381.4 361.2Z" fill="url(#inner)"/><path d="M418.3 411.2 L424.5 403 L449.9 438.6 L449.9 446 L424.5 408Z" fill="#3f8670" opacity="0.75"/><path d="M418.3 411.2 L424.5 407 L449.9 446 L449.9 470 L430 470 L420 440Z" fill="#78cfb0"/><path d="M431.4 417 C433 421 434.8 424 434.4 428 L432.2 428 C431.4 424 431 420 431.4 417Z" fill="#9aa6a0"/><circle cx="434.6" cy="430" r="1.7" fill="#d6fff4"/><path d="M420 458 C428 455 440 452 449.9 451 L449.9 470 L430 470Z" fill="#62b89a"/><path d="M551.3 452.4 C565 455 580 459 592.4 463.9 L602.2 493.5 C590 486 575 480 567 478 L551 470Z" fill="#50a087"/><ellipse cx="562.5" cy="421.5" rx="3.3" ry="9.5" fill="#3f8571"/><path d="M561 412.5 C557.8 417 557.8 426 561.5 431 C563 431.5 564 431 564.5 430 C561.5 426 561 418 563.5 413 C562.8 412.3 561.8 412.2 561 412.5Z" fill="#d8fff6"/><path d="M366.6 356.2 C366.8 390 367.4 420 367.4 440 C368 470 371.3 490 371.3 500 C372 512 373 520 374 528 C375.5 537 378 540 381 543 C390 550 400 555 410 559 C425 565 440 570 456.7 574.1 L396.4 374.2 C390 372.5 384 370 379.8 367.7 C374 364 369 360 366.6 356.2Z" fill="url(#cylL)"/><path d="M366.6 356.2 C366.8 390 367.4 420 367.4 440 C368 470 371.3 490 371.3 500 C372 512 373 520 374 528 C375.5 537 378 540 381 543 L386 543 C380 530 377 500 374 470 C372 430 371 390 371 360Z" fill="#48927a" opacity="0.7"/><path d="M381 543 C390 550 400 555 410 559 C425 565 440 570 456.7 574.1 L455 568 C440 565 420 560 405 553 C395 548 388 545 383 540Z" fill="#4f9c84"/><path d="M370.5 480 C374 481 376 484 377 488 C379 495 384 501 390 507 L387 508 C380 503 374 496 371 490 Z" fill="#f0fffb"/><path d="M377.6 457 C379.5 462 380.4 470 380 478 L378.4 478 C378.6 470 378 463 377 458Z" fill="#e8fffa"/><path d="M376 457 C378 465 378.5 472 378.4 478 L376 478 C376.5 470 375.5 463 374 458Z" fill="#3f8a74"/><path d="M369.5 482 C373 490 378 498 385 505 L388 507 C382 500 377 493 373.5 486Z" fill="#3d7e6a" opacity="0.5"/><path d="M366.6 356.2 C365 345 372 338 385 333 C405 326 440 323.5 480 323.3 C520 323.3 550 324.5 571.2 326.3 L567.5 334 C555 332 530 331 500 331 C450 331.5 415 335 395 342 C383 347 378 354 381.4 361.2 C385 365 392 370 397.9 374.3 L396.4 374.2 C390 372.5 384 370 379.8 367.7 C374 364 369 360 366.6 356.2Z" fill="url(#rim)"/><path d="M368.5 352 C369.5 343 377 337 391 332.5 C414 327 445 325 480 324.6 C520 324.6 548 325.6 569 327.5" fill="none" stroke="#ffffff" stroke-width="2.4" opacity="0.95"/><path d="M384 349 C392 343 420 338 450 336.5" fill="none" stroke="#eafff8" stroke-width="1" opacity="0.8"/><path d="M415 342.5 L468 340 M400 347 L440 343.5" stroke="#f4fffc" stroke-width="0.9"/><path d="M460 333.5 L520 333.5" stroke="#30d060" stroke-width="0.8"/><path d="M469.8 339 L474 331.8 L482 339Z M490 339 L496 331.8 L503 339Z" fill="#3f7e6c"/><path d="M482 339 L476 332 L490 332 L496 339Z" fill="#d8fff4"/><path d="M396.4 374.1 L403.2 374.1 L410.1 383 L430 440 L466 572 L456.7 574.1Z" fill="#00a400" stroke="#7cff8c" stroke-width="0.9"/><path d="M398 375 L403.2 374.6 L410.1 383 L420 417 L414 417Z" fill="#007a00"/><path d="M438 490 C440 478 444 470 447 466 L450 469 L452 527 C446 518 440 505 438 490Z" fill="url(#gface)"/><path d="M567.4 327.3 L571.2 326.3 L586.6 380 L609.6 493.5 L602.2 493.5 L577.6 380Z" fill="#00b000" stroke="#7cff8c" stroke-width="0.9"/><path d="M449.6 347.7 C452 344 458 341.5 464 341 C480 339.5 500 339.2 521.7 339.5 L526 340.7 L545.7 403.8 L548.7 414.3 L548.7 458 L520 468 L449.6 470Z" fill="url(#tower)"/><path d="M449.6 347.3 C452 343 470 340 504 339.5 L521.7 339.5 L523 346 C510 345.5 480 346 468 351 L458.8 358.5 C455 356 451 352 449.6 347.3Z" fill="url(#ttop)"/><ellipse cx="498" cy="345" rx="12" ry="3" fill="#fff" opacity="0.9"/><path d="M519.7 340 L523.6 340 L536 385 L545.7 403.8 L548.7 414.3 L548.7 462 L489.8 470 L487 440 L485.3 391.7 L521.5 391.7 L524.5 391Z" fill="#00b400" stroke="#7cff8c" stroke-width="0.7"/><path d="M490 420 L500 420 L505 470 L492 470Z M515 456 L525 455 L524 466 L514 468Z M528 410 L536 412 L538 462 L530 464Z" fill="#009800"/><path d="M541 404 C545 408 548 412 548.7 416 L548.7 440 C546 430 543 425 540 420Z" fill="url(#gbulge)"/><path d="M468 432 C485 426 520 425 548.7 430" fill="none" stroke="#50ff70" stroke-width="0.7"/><path d="M458.3 355 L465 355 L478.4 385 L485.3 391.7 L487 440 L489.8 470 L477.7 450.6 L464.2 423.4 L468.7 411.3 L459.6 360Z" fill="#00c000" stroke="#7cff8c" stroke-width="0.7"/><path d="M461 356 L465.5 356 L478.4 385 L485.3 392 L485.8 402 L480 397 L470 375Z" fill="#007c00"/><path d="M485.7 392.7 L520.9 392.7 L522.9 417.1 L516.6 417.1 L523 451 C523 456 518 457 516 456 L510 455.4 L503.8 419.3 L497.4 419.3Z" fill="#68a692" stroke="#8cffc8" stroke-width="0.6"/><path d="M499 393 L506 393 L507.5 418 L501 418Z M512 393 L518 393 L519 416.5 L514 416.5Z M506 420 L511 420 L514.5 454 L511 455Z" fill="#84c4ae"/><path d="M438.2 464.7 L451.4 459.8 L484.3 479.5 L495.9 481.2 L487.6 464.7 L525.5 449 L565 463.1 L505.7 487.8Z" fill="#14e414"/><path d="M498.3 480.3 L560 459.8 L565 463.1 L505.7 487.8Z" fill="#a89c00"/><path d="M510.8 478.2 L519.8 475.7 M525.5 471.3 L534.5 468.7 M540.3 464.7 L548.5 461.5" stroke="#f0e800" stroke-width="1.6"/><path d="M449.6 430 L463 430 L477.7 450.6 L490 466 L497 486 L445.6 468.8 L449.6 462Z" fill="#5ba690"/><path d="M456 436 V472 M463 440 V474 M470 446 V477 M478 455 V480" stroke="#72bca6" stroke-width="1.8"/><path d="M449.6 452 C462 454 475 458 487 464" fill="none" stroke="#4a927c" stroke-width="1"/><path d="M445.6 468.8 L505.7 487.8 L505.7 543.7 L453 524 C452 510 451 490 445.6 468.8Z" fill="#a99c00"/><path d="M505.7 487.8 L565 463.1 L565.8 517.4 L505.7 543.7Z" fill="#9c9000"/><path d="M507.4 488.6 L523.9 481.8 L523.9 536.8 L507.4 542Z" fill="#d8cc00"/><path d="M537 475.6 L552.7 469 L552.7 527 L537 531Z" fill="#d4c800"/><path d="M524.7 530.6 L537 529.7 L537 535.5 L524.7 538Z M553.5 515.7 L564.2 511 L564.2 518 L553.5 523Z" fill="#9aa094"/><path d="M438.2 464.7 L445.6 468.8 L505.7 487.8 L565 463.1 M505.7 487.8 V543.7 L565.8 517.4 V463.1 M453 524 L505.7 543.7 M438.2 464.7 L451.4 459.8 M525.5 449 L565 463.1" fill="none" stroke="#8cffd8" stroke-width="1.5"/></svg></body></html>
